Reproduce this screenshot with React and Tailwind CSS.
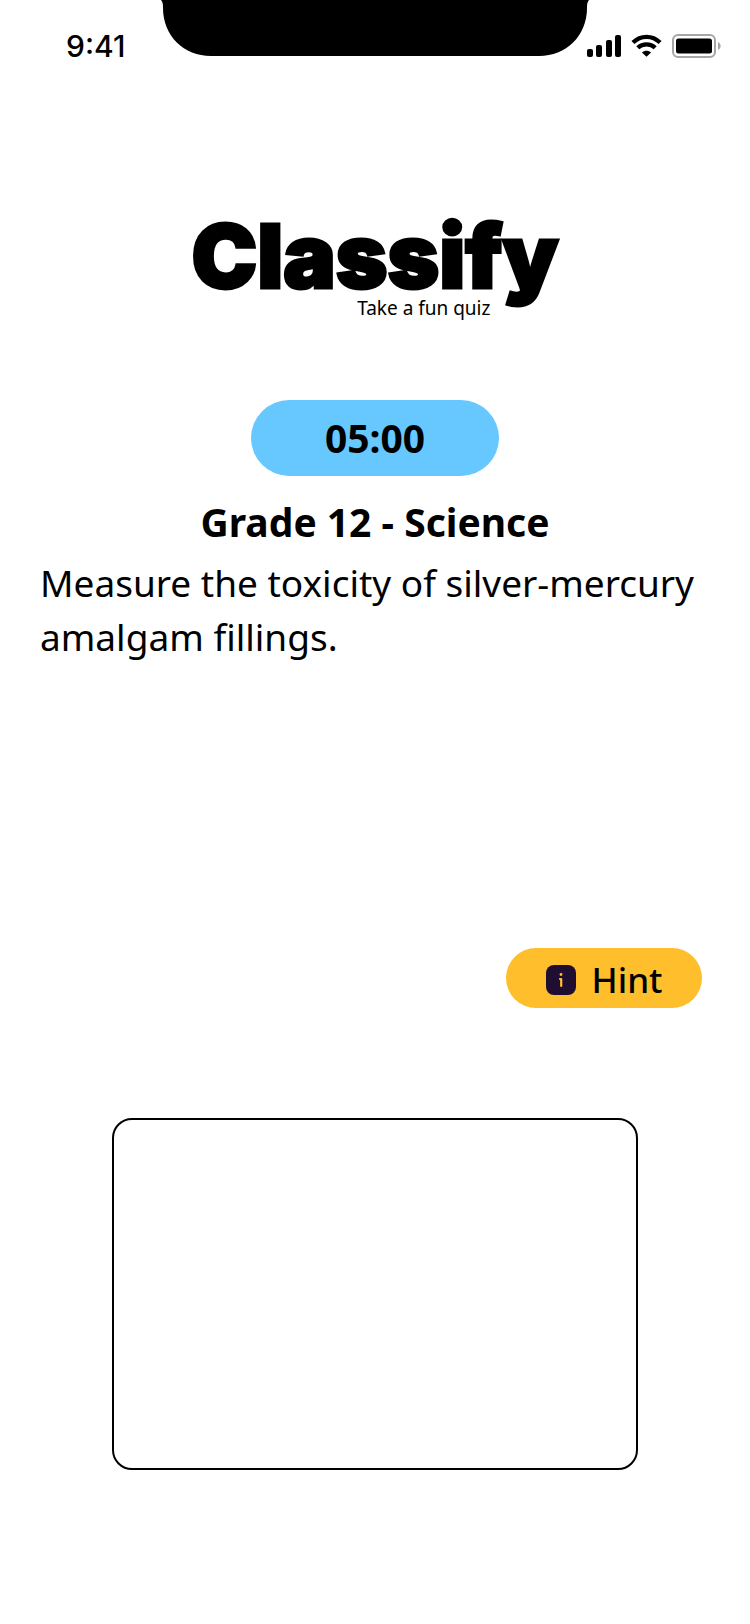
function StatusBar() {
  return (
    <header className="relative flex h-23 items-center justify-between pl-16 pr-7">
      <svg className="absolute left-1/2 top-0 -translate-x-1/2" width="432" height="56" viewBox="0 0 432 56" aria-hidden="true">
        <path d="M2 0C4 2 4 5 4 8C4 36 25 56 52 56H380C407 56 428 36 428 8C428 5 428 2 430 0Z" fill="#000" />
      </svg>
      <time className="pl-0.5 font-['Inter',sans-serif] text-[30px] leading-9 font-medium">9:41</time>
      <div className="flex items-center gap-2.5">
        <svg width="34" height="24" viewBox="1 0 34 24" aria-hidden="true">
          <rect x="1" y="15" width="6" height="8" rx="2" />
          <rect x="10" y="11" width="6" height="12" rx="2" />
          <rect x="20" y="6" width="6" height="17" rx="2" />
          <rect x="29" y="1" width="6" height="22" rx="2" />
        </svg>
        <svg width="31" height="24" viewBox="0 0 32 24" aria-hidden="true">
          <g fill="none" stroke="#000" strokeWidth="4.400">
            <path d="M2 8.500C10 0.500 22 0.500 30 8.500" />
            <path d="M7 13.900C12 9 20 9 25 13.900" />
          </g>
          <path d="M11.300 18.600C14 16.200 18 16.200 20.700 18.600L16 23.200Z" />
        </svg>
        <svg width="50" height="24" viewBox="0 0 50 24" aria-hidden="true">
          <rect x="1" y="1" width="42" height="22" rx="5" fill="none" stroke="#a6a6a6" strokeWidth="2" />
          <rect x="4" y="4.500" width="36" height="15" rx="2.500" />
          <path d="M46 8C49.5 9.5 49.5 14.500 46 16Z" fill="#a6a6a6" />
        </svg>
      </div>
    </header>
  );
}

function Logo() {
  return (
    <div className="relative mt-27">
      <h1 className="font-['Inter',sans-serif] text-[88px] leading-28 font-black [-webkit-text-stroke:3px_#000]">Classify</h1>
      <p className="absolute right-17 top-24 whitespace-nowrap text-[19px] leading-6">Take a fun quiz</p>
    </div>
  );
}

export default function App() {
  return (
    <div className="min-h-screen bg-white font-['Noto_Sans',sans-serif] text-black">
      <StatusBar />
      <main className="flex flex-col items-center px-10 pb-38">
        <Logo />
        <div role="timer" className="mt-22 flex h-19 w-62 items-center justify-center rounded-full bg-[#66c8ff] text-[39px] leading-14 font-bold">
          05:00
        </div>
        <h2 className="mt-[18px] text-[39px] leading-14 font-bold">Grade 12 - Science</h2>
        <p className="mt-1.5 min-h-98 self-stretch text-[37px] leading-[54px]">
          Measure the toxicity of silver-mercury amalgam fillings.
        </p>
        <button type="button" className="mr-2 flex h-15 w-49 items-center justify-center gap-4 self-end rounded-full bg-[#ffbf2d] pt-1 text-[35px] font-medium">
          <svg width="30" height="30" viewBox="0 0 30 30" aria-hidden="true">
            <rect width="30" height="30" rx="8" fill="#200e32" />
            <circle cx="15" cy="9.500" r="1.400" fill="#ffbf2d" />
            <path d="M14 14H15.200V21" fill="none" stroke="#ffbf2d" strokeWidth="2.200" strokeLinecap="round" strokeLinejoin="round" />
          </svg>
          Hint
        </button>
        <textarea aria-label="Answer" className="mt-[110px] block h-88 w-full max-w-[526px] resize-none rounded-[20px] border-2 border-black bg-white p-5 text-2xl" />
      </main>
    </div>
  );
}
